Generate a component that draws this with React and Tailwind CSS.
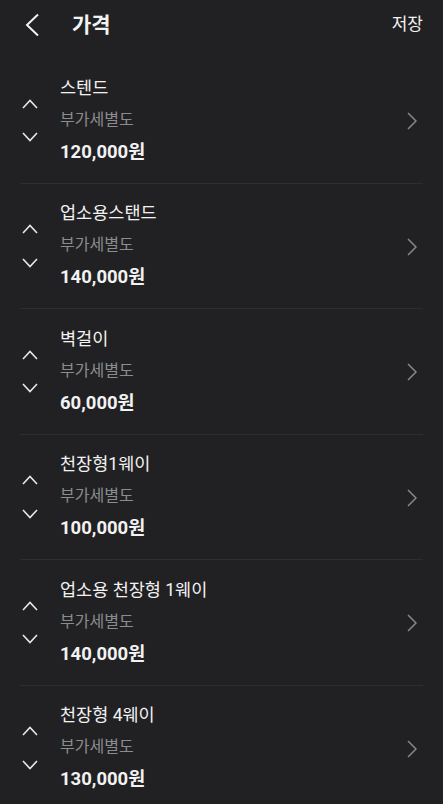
import React from "react";

const items = [
  { name: "스텐드", price: "120,000원" },
  { name: "업소용스탠드", price: "140,000원" },
  { name: "벽걸이", price: "60,000원" },
  { name: "천장형1웨이", price: "100,000원" },
  { name: "업소용 천장형 1웨이", price: "140,000원" },
  { name: "천장형 4웨이", price: "130,000원" },
];

function Up() {
  return (
    <svg width="16" height="10" viewBox="0 0 16 10" fill="none">
      <path d="M1 9L8 1.5L15 9" stroke="#e8e8e8" strokeWidth="1.6" />
    </svg>
  );
}
function Down() {
  return (
    <svg width="16" height="10" viewBox="0 0 16 10" fill="none">
      <path d="M1 1L8 8.5L15 1" stroke="#e8e8e8" strokeWidth="1.6" />
    </svg>
  );
}

export default function App() {
  return (
    <div
      className="w-[443px] h-[804px] overflow-hidden bg-[#212123] text-[#f2f2f2]"
      style={{ fontFamily: 'Roboto, "Noto Sans CJK KR", "Noto Sans", sans-serif' }}
    >
      <div className="h-[58px] flex items-center pl-[24px] pr-[20px]">
        <svg width="16" height="24" viewBox="0 0 16 24" fill="none" className="mt-[-8px]">
          <path d="M14 1.5L3 12L14 22.5" stroke="#f2f2f2" strokeWidth="2" />
        </svg>
        <div className="ml-[32px] text-[21px] font-bold leading-none mt-[-8px]">가격</div>
        <div className="ml-auto text-[17px] leading-none mt-[-10px]">저장</div>
      </div>
      {items.map((it, i) => (
        <div key={i} className="mx-[20px] h-[125.5px] flex items-center border-b border-[#2e2e30]">
          <div className="w-[40px] flex flex-col items-start pl-[2px] gap-[23.5px]">
            <Up />
            <Down />
          </div>
          <div className="flex-1 flex flex-col mt-[-1px]">
            <div className="text-[17.5px] leading-[32px]">{it.name}</div>
            <div className="text-[16px] leading-[32px] text-[#8c8c8e]">부가세별도</div>
            <div className="text-[18.5px] font-bold leading-[32px]">{it.price}</div>
          </div>
          <svg width="10" height="18" viewBox="0 0 10 18" fill="none" className="mr-[6px] mt-[2px]">
            <path d="M1 1L9 9L1 17" stroke="#8a8a8a" strokeWidth="1.5" />
          </svg>
        </div>
      ))}
    </div>
  );
}
